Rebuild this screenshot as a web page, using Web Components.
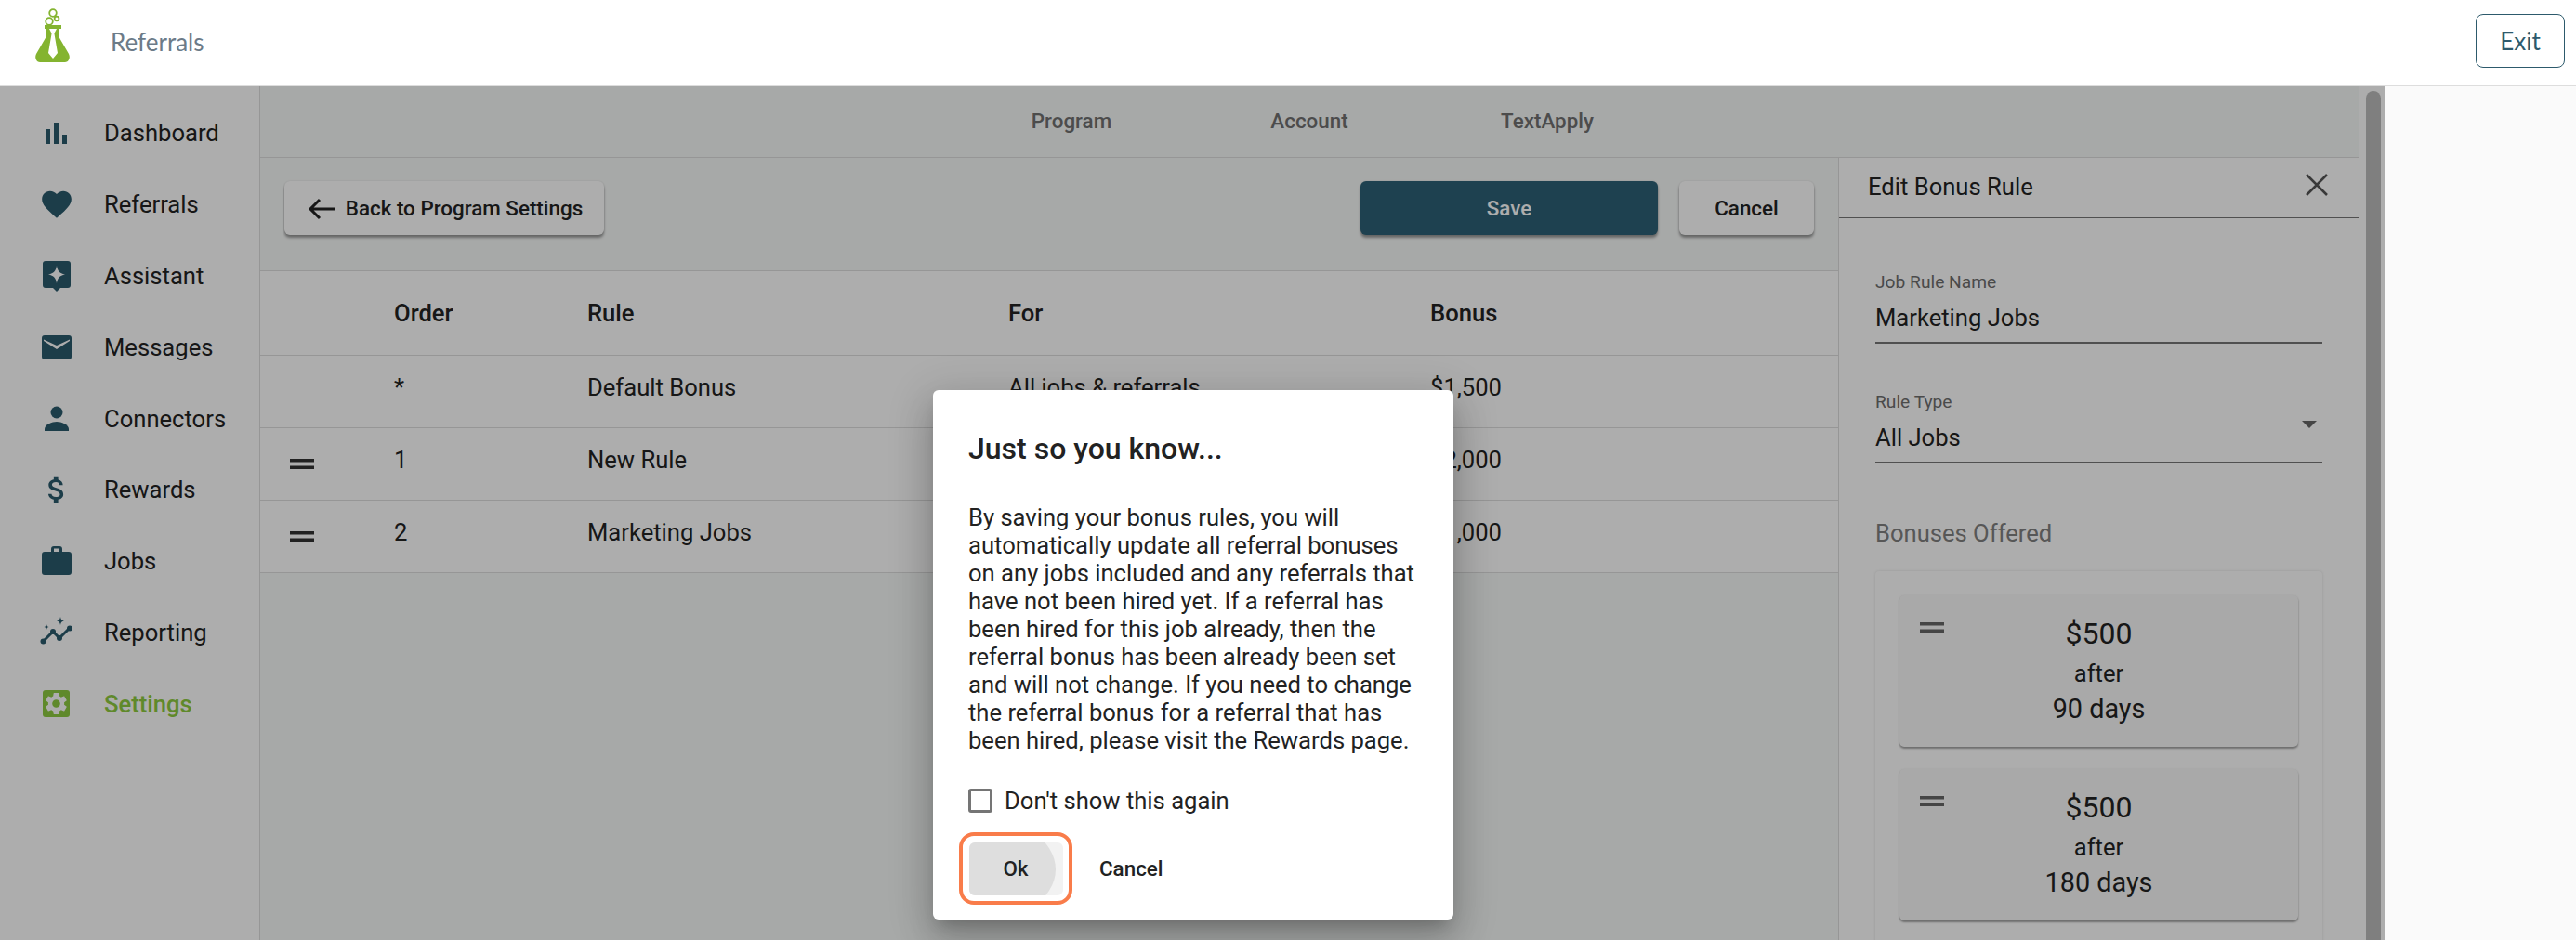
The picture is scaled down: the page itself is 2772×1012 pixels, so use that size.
<!DOCTYPE html>
<html>
<head>
<meta charset="utf-8">
<title>Referrals</title>
<style>
  html, body { margin: 0; height: 100%; overflow: hidden; background: #fafafa; }
  body { font-family: Roboto, "Liberation Sans", sans-serif; color: #222; }
  #page { position: relative; width: 2772px; height: 1012px; overflow: hidden; }
  #work { display: flex; height: 919px; }
</style>
</head>
<body>
<div id="page">
  <app-header title-text="Referrals"></app-header>
  <div id="work">
    <side-nav>
      <nav-item icon="bars" label="Dashboard"></nav-item>
      <nav-item icon="heart" label="Referrals"></nav-item>
      <nav-item icon="assist" label="Assistant"></nav-item>
      <nav-item icon="mail" label="Messages"></nav-item>
      <nav-item icon="person" label="Connectors"></nav-item>
      <nav-item icon="dollar" label="Rewards"></nav-item>
      <nav-item icon="case" label="Jobs"></nav-item>
      <nav-item icon="trend" label="Reporting"></nav-item>
      <nav-item icon="gear" label="Settings" active></nav-item>
    </side-nav>
    <main-area>
      <tab-bar></tab-bar>
      <rule-editor></rule-editor>
    </main-area>
    <scroll-track></scroll-track>
  </div>
  <modal-scrim>
    <notice-dialog></notice-dialog>
  </modal-scrim>
</div>

<script>
// Icons, all on a 38px box so the nav column lines up
const ICONS = {
  bars: '<svg viewBox="0 0 38 38"><rect x="7" y="15" width="5" height="16"/><rect x="16" y="8" width="5" height="23"/><rect x="25" y="21" width="5" height="10"/></svg>',
  heart: '<svg viewBox="0 0 24 24"><path d="M12 21.35l-1.45-1.32C5.4 15.36 2 12.28 2 8.5 2 5.42 4.42 3 7.5 3c1.74 0 3.41.81 4.5 2.09C13.09 3.81 14.76 3 16.5 3 19.58 3 22 5.42 22 8.5c0 3.78-3.4 6.86-8.55 11.54L12 21.35z"/></svg>',
  assist: '<svg viewBox="0 0 38 38"><path fill-rule="evenodd" d="M7 3h24a3 3 0 0 1 3 3v23a3 3 0 0 1-3 3h-8l-4 4-4-4H7a3 3 0 0 1-3-3V6a3 3 0 0 1 3-3zM19 8c1 6 3 8 9 9.500-6 1.500-8 3.500-9 9.500-1-6-3-8-9-9.500 6-1.500 8-3.500 9-9.500z"/></svg>',
  mail: '<svg viewBox="0 0 38 38"><path fill-rule="evenodd" d="M6 6h26a3 3 0 0 1 3 3v20a3 3 0 0 1-3 3H6a3 3 0 0 1-3-3V9a3 3 0 0 1 3-3zM5 12l14 9 14-9v-1.500L19 17 5 10.500z"/></svg>',
  person: '<svg viewBox="0 0 38 38"><circle cx="19" cy="12" r="6.500"/><path d="M6 32v-2c0-5 8-8 13-8s13 3 13 8v2z"/></svg>',
  dollar: '<svg viewBox="0 0 24 24"><path d="M11.800 10.900c-2.270-.590-3-1.200-3-2.150 0-1.090 1.010-1.850 2.700-1.850 1.780 0 2.440.850 2.500 2.100h2.210c-.070-1.720-1.120-3.300-3.210-3.810V3h-3v2.160c-1.940.420-3.500 1.680-3.500 3.610 0 2.310 1.910 3.460 4.700 4.130 2.500.600 3 1.480 3 2.410 0 .690-.490 1.790-2.700 1.790-2.060 0-2.870-.920-2.980-2.100h-2.200c.120 2.190 1.760 3.420 3.680 3.830V21h3v-2.150c1.950-.370 3.500-1.500 3.500-3.550 0-2.840-2.430-3.810-4.700-4.400z"/></svg>',
  case: '<svg viewBox="0 0 38 38"><path fill-rule="evenodd" d="M13 9V6a3 3 0 0 1 3-3h6a3 3 0 0 1 3 3v3h7a3 3 0 0 1 3 3v19a3 3 0 0 1-3 3H6a3 3 0 0 1-3-3V12a3 3 0 0 1 3-3zM16 9h6V5.500h-6z"/></svg>',
  trend: '<svg viewBox="0 0 38 38"><path d="M4 29l11-11 7 7 11-11" fill="none" stroke="currentColor" stroke-width="3" stroke-linejoin="round" stroke-linecap="round"/><circle cx="4.500" cy="28.500" r="3"/><circle cx="15" cy="18" r="3"/><circle cx="22" cy="25" r="3"/><circle cx="33" cy="14.500" r="3"/><path d="M23 2c.6 3 1.500 4 4 4.500-2.500.5-3.400 1.500-4 4.500-.6-3-1.500-4-4-4.500 2.500-.5 3.400-1.500 4-4.500zM8 10c.4 2 .9 2.600 2.800 3-1.900.4-2.400 1-2.800 3-.4-2-.9-2.600-2.800-3 1.900-.4 2.400-1 2.800-3z"/></svg>',
  gear: '<svg viewBox="0 0 38 38"><rect x="4" y="4" width="29" height="29" rx="3"/><g transform="translate(4.100 4.100) scale(1.200)"><path fill="#fff" fill-rule="evenodd" d="M19.140 12.940c.040-.300.060-.610.060-.940 0-.320-.020-.640-.070-.940l2.030-1.580c.180-.140.230-.410.120-.610l-1.920-3.320c-.120-.220-.370-.290-.590-.220l-2.390.960c-.500-.380-1.030-.700-1.620-.940l-.360-2.540c-.040-.240-.240-.410-.480-.410h-3.840c-.240 0-.430.170-.47.410l-.360 2.540c-.590.240-1.130.570-1.620.940l-2.390-.960c-.220-.080-.470 0-.590.220L2.740 8.870c-.120.210-.080.470.120.610l2.030 1.580c-.050.300-.090.630-.090.940s.020.640.07.940l-2.030 1.580c-.180.140-.230.410-.12.610l1.920 3.320c.120.220.37.290.59.220l2.390-.96c.500.380 1.030.700 1.620.94l.36 2.540c.05.240.24.41.48.41h3.840c.24 0 .44-.17.47-.41l.36-2.540c.59-.24 1.13-.56 1.62-.94l2.39.96c.22.08.47 0 .59-.22l1.92-3.32c.12-.22.07-.47-.12-.61l-2.010-1.58zM12 15.600c-1.980 0-3.600-1.620-3.600-3.600s1.620-3.600 3.600-3.600 3.600 1.620 3.600 3.600-1.620 3.600-3.600 3.600z"/></g></svg>'
};

const DRAG = '<svg width="26" height="12" viewBox="0 0 26 12"><rect y="0" width="26" height="3.500"/><rect y="7.500" width="26" height="3.500"/></svg>';

function shadow(el, html) {
  const root = el.attachShadow({ mode: 'open' });
  root.innerHTML = html;
  return root;
}

class AppHeader extends HTMLElement {
  connectedCallback() {
    shadow(this, `
      <style>
        :host { display: flex; align-items: center; height: 92px; border-bottom: 1px solid #ddd; background: #fff; padding: 0 12px 0 38px; font-family: Lato, sans-serif; }
        svg { width: 37px; height: 58px; flex: none; margin-top: -16px; }
        .title { margin-left: 44px; margin-top: -3px; font-size: 26px; color: #6c7b88; flex: 1; }
        .exit { width: 94px; height: 56px; margin-top: -4px; display: flex; align-items: center; justify-content: center; border: 1px solid #2d5a6c; border-radius: 8px; color: #2d5a6c; font-size: 26px; }
      </style>
      <svg viewBox="0 0 37 58">
        <g fill="none" stroke="#84b430" stroke-width="1.8"><circle cx="19" cy="5" r="3.800"/><circle cx="15" cy="14" r="3.800"/><circle cx="23" cy="11" r="2.400"/></g>
        <path fill="#84b430" d="M10 18h18v4h-3v8l11 19c2 4 0 9-4 9H5c-4 0-6-5-4-9l11-19v-8h-2z"/>
        <path fill="#fff" d="M15 22h8l-2.600 5 3.600 21-5 6-5-6 3.600-21z"/>
      </svg>
      <span class="title">${this.getAttribute('title-text')}</span>
      <span class="exit">Exit</span>`);
  }
}

class SideNav extends HTMLElement {
  connectedCallback() {
    shadow(this, `
      <style>
        :host { display: flex; flex-direction: column; box-sizing: border-box; width: 280px; flex: none; padding-top: 12px; background: #fff; border-right: 1px solid #ddd; }
      </style>
      <slot></slot>`);
  }
}

class NavItem extends HTMLElement {
  connectedCallback() {
    const on = this.hasAttribute('active');
    shadow(this, `
      <style>
        :host { display: flex; align-items: center; height: 76.800px; padding-left: 42px; font-size: 25.600px; color: ${on ? '#8dca40' : '#222'}; font-weight: ${on ? 500 : 400}; }
        .i { width: 38px; height: 38px; color: ${on ? '#8dca40' : '#2a5a6c'}; fill: currentColor; flex: none; }
        svg { display: block; width: 38px; height: 38px; }
        .t { margin-left: 32px; }
      </style>
      <span class="i">${ICONS[this.getAttribute('icon')]}</span>
      <span class="t">${this.getAttribute('label')}</span>`);
  }
}

class MainArea extends HTMLElement {
  connectedCallback() {
    shadow(this, `
      <style>:host { display: flex; flex-direction: column; width: 2259px; flex: none; background: #f7f9f8; border-right: 1px solid #ddd; box-sizing: border-box; overflow: hidden; }</style>
      <slot></slot>`);
  }
}

class TabBar extends HTMLElement {
  connectedCallback() {
    shadow(this, `
      <style>
        :host { display: flex; height: 76px; flex: none; border-bottom: 1px solid #ddd; padding-left: 823px; align-items: center; gap: 156px; font-size: 22.400px; font-weight: 500; color: #707070; }
        span { width: 100px; text-align: center; white-space: nowrap; margin-top: -2px; }
      </style>
      <span>Program</span><span>Account</span><span>TextApply</span>`);
  }
}

class RaisedButton extends HTMLElement {
  connectedCallback() {
    const primary = this.hasAttribute('primary');
    shadow(this, `
      <style>
        :host { display: inline-flex; align-items: center; justify-content: center; box-sizing: border-box; height: 58px; border-radius: 6px; font-size: 22.400px; font-weight: 500; gap: 11px;
          background: ${primary ? '#2d6176' : '#fff'}; color: ${primary ? '#fff' : '#222'}; box-shadow: 0 3px 3px rgba(0,0,0,.38), 0 0 2px rgba(0,0,0,.12); }
      </style>
      <slot></slot>`);
  }
}

class RuleRow extends HTMLElement {
  connectedCallback() {
    const c = (this.getAttribute('cells') || '').split('|');
    shadow(this, `
      <style>
        :host { display: grid; grid-template-columns: 144px 208px 453px 454px 1fr; align-items: center; height: 77px; border-bottom: 1px solid #ddd; background: #fff; font-size: 25.600px; font-weight: ${this.hasAttribute('head') ? 500 : 400}; }
        :host([head]) { height: 90px; }
        :host(:not([head])) span:not(.d) { padding-bottom: 9px; }
        .d { padding-left: 32px; fill: #333; }
        svg { display: block; }
      </style>
      <span class="d">${this.hasAttribute('drag') ? DRAG : ''}</span>
      <span>${c[0]}</span><span>${c[1]}</span><span>${c[2]}</span><span>${c[3]}</span>`);
  }
}

class RuleEditor extends HTMLElement {
  connectedCallback() {
    shadow(this, `
      <style>
        :host { display: flex; flex: 1; min-height: 0; }
        .left { width: 1698px; flex: none; }
        .actions { display: flex; align-items: center; box-sizing: border-box; height: 122px; border-bottom: 1px solid #ddd; padding: 0 26px 14px 26px; }
        .back { width: 344px; }
        .save { width: 320px; margin-left: auto; }
        .cancel { width: 145px; margin-left: 23px; }
        .arrow { width: 30px; height: 24px; fill: none; stroke: #222; stroke-width: 3; margin: 2px 0 0 2px; }
      </style>
      <div class="left">
        <div class="actions">
          <raised-button class="back"><svg class="arrow" viewBox="0 0 30 24"><path d="M30 12H3M13 2L3 12l10 10"/></svg>Back to Program Settings</raised-button>
          <raised-button class="save" primary>Save</raised-button>
          <raised-button class="cancel">Cancel</raised-button>
        </div>
        <rule-row head cells="Order|Rule|For|Bonus"></rule-row>
        <rule-row cells="*|Default Bonus|All jobs &amp; referrals|$1,500"></rule-row>
        <rule-row drag cells="1|New Rule||$2,000"></rule-row>
        <rule-row drag cells="2|Marketing Jobs||$1,000"></rule-row>
      </div>
      <edit-panel></edit-panel>`);
  }
}

class EditPanel extends HTMLElement {
  connectedCallback() {
    shadow(this, `
      <style>
        :host { display: block; box-sizing: border-box; flex: 1; background: #fff; border-left: 1px solid #ddd; overflow: hidden; }
        .top { display: flex; align-items: center; justify-content: space-between; box-sizing: border-box; height: 65px; padding: 0 33px 2px 31px; border-bottom: 1.500px solid #777; font-size: 25.600px; color: #222; }
        .x { width: 24px; height: 24px; stroke: #555; stroke-width: 2.500; fill: none; margin-top: -4px; }
        .body { padding: 55px 39px 0; }
        .field { position: relative; height: 78px; border-bottom: 2px solid #777; margin-bottom: 49px; }
        .lab { font-size: 19.200px; color: #6e6e6e; line-height: 28px; }
        .val { font-size: 25.600px; color: #222; line-height: 34px; margin-top: 7px; }
        .caret { position: absolute; right: 6px; top: 34px; width: 0; height: 0; border: 8px solid transparent; border-top: 8px solid #666; border-bottom: 0; }
        .sec { font-size: 25.600px; color: #808080; line-height: 34px; margin-top: 58px; }
        .outer { margin-top: 24px; padding: 26px 26px 26px; background: #fff; box-shadow: 0 0 3px rgba(0,0,0,.12); border-radius: 4px; display: flex; flex-direction: column; gap: 24px; height: 500px; box-sizing: border-box; }
      </style>
      <div class="top">
        <span>Edit Bonus Rule</span>
        <svg class="x" viewBox="0 0 24 24"><path d="M1 1l22 22M23 1L1 23"/></svg>
      </div>
      <div class="body">
        <div class="field"><div class="lab">Job Rule Name</div><div class="val">Marketing Jobs</div></div>
        <div class="field"><div class="lab">Rule Type</div><div class="val">All Jobs</div><span class="caret"></span></div>
        <div class="sec">Bonuses Offered</div>
        <div class="outer">
          <bonus-card amount="$500" days="90 days"></bonus-card>
          <bonus-card amount="$500" days="180 days"></bonus-card>
        </div>
      </div>`);
  }
}

class BonusCard extends HTMLElement {
  connectedCallback() {
    shadow(this, `
      <style>
        :host { position: relative; display: flex; flex-direction: column; align-items: center; box-sizing: border-box; height: 163px; padding-top: 22px; background: #f9f9f9; border-radius: 5px; box-shadow: 0 2px 2px rgba(0,0,0,.35), 0 0 2px rgba(0,0,0,.08); color: #222; }
        .d { position: absolute; left: 22px; top: 29px; fill: #666; }
        svg { display: block; }
        .a { font-size: 32px; line-height: 38px; }
        .after { font-size: 25.600px; line-height: 38px; margin-top: 5px; }
        .s { font-size: 28.800px; line-height: 38px; margin-top: 0; }
      </style>
      <span class="d">${DRAG}</span>
      <span class="a">${this.getAttribute('amount')}</span>
      <span class="after">after</span>
      <span class="s">${this.getAttribute('days')}</span>`);
  }
}

class ScrollTrack extends HTMLElement {
  connectedCallback() {
    shadow(this, `
      <style>
        :host { display: block; box-sizing: border-box; width: 28px; flex: none; background: #fff; padding: 5px 5px 0 7px; }
        div { height: 100%; background: #bcbcbc; border-radius: 8px 8px 0 0; }
      </style>
      <div></div>`);
  }
}

class ModalScrim extends HTMLElement {
  connectedCallback() {
    shadow(this, `
      <style>
        :host { position: absolute; left: 0; top: 93px; width: 2567px; bottom: 0; background: rgba(0,0,0,.32); }
      </style>
      <slot></slot>`);
  }
}

class NoticeDialog extends HTMLElement {
  connectedCallback() {
    shadow(this, `
      <style>
        :host { position: absolute; left: 1004px; top: 327px; box-sizing: border-box; width: 560px; height: 570px; padding: 43px 38px 0; background: #fff; border-radius: 6px; color: #222; box-shadow: 0 11px 15px -7px rgba(0,0,0,.2), 0 24px 38px 3px rgba(0,0,0,.14), 0 9px 46px 8px rgba(0,0,0,.12); }
        h2 { margin: 0; font-size: 32px; font-weight: 500; line-height: 40px; }
        p { margin: 39px 0 0; font-size: 25.600px; line-height: 30px; }
        .check { display: flex; align-items: center; margin-top: 35px; font-size: 25.600px; height: 30px; }
        .box { box-sizing: border-box; width: 26px; height: 26px; border: 3px solid #757575; border-radius: 3px; margin-right: 13px; }
        .acts { display: flex; align-items: center; margin-top: 19px; font-size: 22.400px; font-weight: 500; }
        .ok { position: relative; box-sizing: border-box; width: 122px; height: 78px; margin-left: -10px; padding: 6.500px; border: 4px solid #f97c4a; border-radius: 16px; }
        .fill { position: relative; display: flex; align-items: center; justify-content: center; height: 100%; border-radius: 6px; background: #f2f2f2; overflow: hidden; }
        .fill::before { content: ""; position: absolute; right: 8px; top: -30px; width: 180px; height: 118px; border-radius: 50%; background: #dedede; }
        .fill span { position: relative; }
        .cancel { margin-left: 29px; }
      </style>
      <h2>Just so you know...</h2>
      <p>By saving your bonus rules, you will automatically update all referral bonuses on any jobs included and any referrals that have not been hired yet. If a referral has been hired for this job already, then the referral bonus has been already been set and will not change. If you need to change the referral bonus for a referral that has been hired, please visit the Rewards page.</p>
      <div class="check"><span class="box"></span>Don't show this again</div>
      <div class="acts">
        <div class="ok"><div class="fill"><span>Ok</span></div></div>
        <span class="cancel">Cancel</span>
      </div>`);
  }
}

customElements.define('app-header', AppHeader);
customElements.define('side-nav', SideNav);
customElements.define('nav-item', NavItem);
customElements.define('main-area', MainArea);
customElements.define('tab-bar', TabBar);
customElements.define('raised-button', RaisedButton);
customElements.define('rule-row', RuleRow);
customElements.define('rule-editor', RuleEditor);
customElements.define('edit-panel', EditPanel);
customElements.define('bonus-card', BonusCard);
customElements.define('scroll-track', ScrollTrack);
customElements.define('modal-scrim', ModalScrim);
customElements.define('notice-dialog', NoticeDialog);
</script>
</body>
</html>
